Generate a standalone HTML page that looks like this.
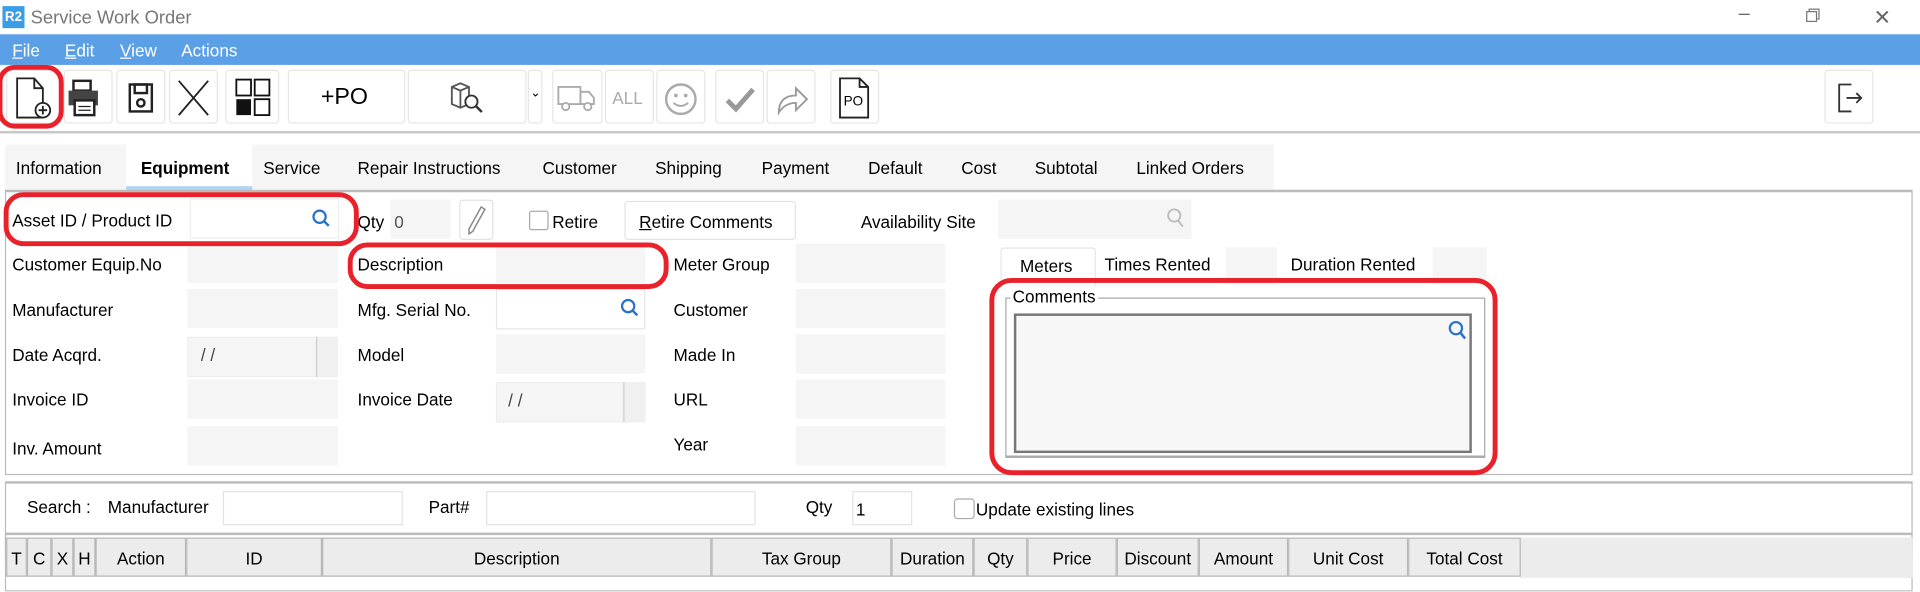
<!DOCTYPE html>
<html><head><meta charset="utf-8"><style>
*{box-sizing:border-box;margin:0;padding:0}
body{width:1920px;height:592px;overflow:hidden;background:#fff;font-family:"Liberation Sans",sans-serif;}
#w{position:absolute;left:0;top:0;width:1568px;height:483px;transform:scale(1.22449);transform-origin:0 0;font-size:14px;color:#000}
.a{position:absolute}
.t{position:absolute;white-space:nowrap;line-height:1}
.in{position:absolute;background:#f5f5f5;height:32px}
.btn{position:absolute;top:57px;height:44px;border:1px solid #e6e6e6;border-radius:3px;background:#fff}
.red{position:absolute;border:4px solid #e8212a;border-radius:16px}
.tab{position:absolute;top:129px}
.h{position:absolute;top:439px;height:32px;background:#ececec;border:1px solid #b8b8b8;text-align:center;line-height:32px;font-size:14px}
u{text-decoration:underline}
</style></head><body><div id="w">
<!-- title -->
<div class="a" style="left:2px;top:5px;width:18px;height:18px;background:#3b9de6;color:#fff;font-size:11px;font-weight:bold;text-align:center;line-height:18px">R2</div>
<div class="t" style="left:25px;top:7px;font-size:15px;color:#777">Service Work Order</div>
<div class="t" style="left:1420px;top:4px;font-size:16px;color:#666">–</div>
<div class="a" style="left:1477px;top:7px;width:9px;height:9px;border:1px solid #777"></div>
<div class="a" style="left:1475px;top:9px;width:9px;height:9px;border:1px solid #777;background:#fff"></div>
<div class="t" style="left:1530px;top:6px;font-size:17px;color:#666">✕</div>
<!-- menu -->
<div class="a" style="left:0;top:28px;width:1568px;height:25px;background:#5b9fe6"></div>
<div class="t" style="left:10px;top:34px;color:#fff"><u>F</u>ile</div>
<div class="t" style="left:53px;top:34px;color:#fff"><u>E</u>dit</div>
<div class="t" style="left:98px;top:34px;color:#fff"><u>V</u>iew</div>
<div class="t" style="left:148px;top:34px;color:#fff">Actions</div>
<!-- toolbar -->
<div class="btn" style="left:5px;width:45px"></div>
<svg class="a" style="left:12px;top:62px" width="32" height="36"><path d="M2 2h14l7 8v24H2z M16 2v8h7" fill="none" stroke="#222" stroke-width="1.5"/><circle cx="23" cy="28" r="6" fill="#fff" stroke="#222" stroke-width="1.5"/><path d="M19.5 28h7M23 24.5v7" stroke="#222" stroke-width="1.5"/></svg>
<div class="btn" style="left:52px;width:40px"></div>
<svg class="a" style="left:54px;top:64px" width="30" height="32"><rect x="6" y="2" width="14" height="8" fill="none" stroke="#222" stroke-width="2"/><rect x="2" y="10" width="24" height="12" fill="#444"/><rect x="7" y="18" width="16" height="12" fill="#fff" stroke="#222" stroke-width="2"/><path d="M10 23h10M10 26h10" stroke="#222"/></svg>
<div class="btn" style="left:95px;width:40px"></div>
<svg class="a" style="left:104px;top:67px" width="22" height="26"><rect x="2" y="2" width="18" height="22" fill="none" stroke="#222" stroke-width="2"/><rect x="6" y="2" width="10" height="7" fill="none" stroke="#222" stroke-width="2"/><circle cx="11" cy="17" r="3" fill="none" stroke="#222" stroke-width="2"/></svg>
<div class="btn" style="left:138px;width:40px"></div>
<svg class="a" style="left:144px;top:64px" width="28" height="32"><path d="M2 2L26 30M26 2L2 30" stroke="#222" stroke-width="1.5"/></svg>
<div class="btn" style="left:184px;width:44px"></div>
<svg class="a" style="left:192px;top:64px" width="30" height="32"><rect x="1" y="1" width="12" height="13" fill="none" stroke="#111" stroke-width="1.5"/><rect x="16" y="1" width="12" height="13" fill="none" stroke="#111" stroke-width="1.5"/><rect x="1" y="17" width="12" height="13" fill="#111"/><rect x="16" y="17" width="12" height="13" fill="none" stroke="#111" stroke-width="1.5"/></svg>
<div class="btn" style="left:235px;width:96px"></div>
<div class="t" style="left:262px;top:70px;font-size:19px">+PO</div>
<div class="btn" style="left:333px;width:97px"></div>
<svg class="a" style="left:366px;top:66px" width="32" height="28"><path d="M3 5l7-3 7 3v14l-7 3-7-3z M3 5l7 3 7-3 M10 8v14" fill="none" stroke="#555" stroke-width="1.5"/><circle cx="19" cy="17" r="5" fill="#fff" stroke="#333" stroke-width="1.5"/><path d="M22.5 20.5l5 5" stroke="#333" stroke-width="2"/></svg>
<div class="btn" style="left:431px;width:12px"></div>
<div class="t" style="left:433px;top:72px;font-size:10px">⌄</div>
<div class="btn" style="left:451px;width:41px"></div>
<svg class="a" style="left:454px;top:68px" width="34" height="24"><rect x="2" y="3" width="18" height="14" fill="none" stroke="#aaa" stroke-width="1.5"/><path d="M20 7h7l4 5v5H20z" fill="none" stroke="#aaa" stroke-width="1.5"/><circle cx="8" cy="19" r="3" fill="#fff" stroke="#aaa" stroke-width="1.5"/><circle cx="26" cy="19" r="3" fill="#fff" stroke="#aaa" stroke-width="1.5"/></svg>
<div class="btn" style="left:494px;width:40px"></div>
<div class="t" style="left:500px;top:73px;font-size:14px;color:#aaa">ALL</div>
<div class="btn" style="left:536px;width:40px"></div>
<svg class="a" style="left:541px;top:66px" width="30" height="30"><circle cx="15" cy="15" r="12" fill="none" stroke="#aaa" stroke-width="2"/><circle cx="11" cy="12" r="1.5" fill="#aaa"/><circle cx="19" cy="12" r="1.5" fill="#aaa"/><path d="M9 18q6 5 12 0" fill="none" stroke="#aaa" stroke-width="1.5"/></svg>
<div class="btn" style="left:584px;width:40px"></div>
<svg class="a" style="left:592px;top:70px" width="26" height="22"><path d="M2 12l7 7L23 3" fill="none" stroke="#999" stroke-width="4"/></svg>
<div class="btn" style="left:626px;width:40px"></div>
<svg class="a" style="left:632px;top:66px" width="30" height="30"><path d="M4 26q0-14 14-14V6l9 9-9 9v-6q-9 0-14 8z" fill="none" stroke="#999" stroke-width="1.5"/></svg>
<div class="btn" style="left:678px;width:40px"></div>
<svg class="a" style="left:684px;top:62px" width="28" height="36"><path d="M2 2h16l7 7v25H2z M18 2v7h7" fill="none" stroke="#222" stroke-width="1.5"/><text x="5" y="24" font-size="11" font-family="Liberation Sans">PO</text></svg>
<div class="btn" style="left:1490px;width:40px"></div>
<svg class="a" style="left:1498px;top:66px" width="26" height="28"><path d="M14 3H4v22h10" fill="none" stroke="#333" stroke-width="1.5"/><path d="M10 14h12M18 10l4 4-4 4" fill="none" stroke="#333" stroke-width="1.5"/></svg>
<div class="red" style="left:-2px;top:53px;width:54px;height:52px;border-radius:14px"></div>
<div class="a" style="left:0;top:107px;width:1568px;height:2px;background:#c8c8c8"></div>
<!-- tabs -->
<div class="a" style="left:4px;top:118px;width:1036px;height:37px;background:#f5f5f5"></div>
<div class="a" style="left:103px;top:118px;width:103px;height:37px;background:#fff"></div>
<div class="a" style="left:103px;top:152px;width:103px;height:4px;background:#b5d3f3"></div>
<div class="tab" style="left:13px">Information</div>
<div class="tab" style="left:115px;font-weight:bold">Equipment</div>
<div class="tab" style="left:215px">Service</div>
<div class="tab" style="left:292px">Repair Instructions</div>
<div class="tab" style="left:443px">Customer</div>
<div class="tab" style="left:535px">Shipping</div>
<div class="tab" style="left:622px">Payment</div>
<div class="tab" style="left:709px">Default</div>
<div class="tab" style="left:785px">Cost</div>
<div class="tab" style="left:845px">Subtotal</div>
<div class="tab" style="left:928px">Linked Orders</div>
<div class="a" style="left:4px;top:155px;width:1558px;height:233px;border:1px solid #bbb;border-top-width:2px"></div>
<!-- row1 -->
<div class="t" style="left:10px;top:173px">Asset ID / Product ID</div>
<div class="a" style="left:155px;top:162px;width:122px;height:33px;background:#fff;border:1px solid #eee"></div>
<svg class="a" style="left:254px;top:170px" width="16" height="16"><circle cx="7" cy="7" r="5" fill="none" stroke="#2a72c9" stroke-width="1.8"/><path d="M10.5 10.5l4 4" stroke="#2a72c9" stroke-width="2"/></svg>
<div class="t" style="left:292px;top:174px">Qty</div>
<div class="in" style="left:319px;top:163px;width:49px"></div>
<div class="t" style="left:322px;top:174px;color:#555">0</div>
<div class="a" style="left:375px;top:163px;width:28px;height:33px;border:1px solid #e3e3e3;border-radius:3px"></div>
<svg class="a" style="left:380px;top:167px" width="18" height="26"><path d="M13 2l3 2-10 18-3 2 0-4z" fill="none" stroke="#888" stroke-width="1.2"/></svg>
<div class="a" style="left:432px;top:172px;width:16px;height:16px;border:1px solid #aaa;border-radius:2px"></div>
<div class="t" style="left:451px;top:174px">Retire</div>
<div class="a" style="left:510px;top:164px;width:140px;height:32px;border:1px solid #e3e3e3;border-radius:3px"></div>
<div class="t" style="left:522px;top:174px"><u>R</u>etire Comments</div>
<div class="t" style="left:703px;top:174px">Availability Site</div>
<div class="in" style="left:815px;top:163px;width:158px"></div>
<svg class="a" style="left:952px;top:169px" width="16" height="18"><circle cx="7" cy="7" r="5" fill="none" stroke="#bbb" stroke-width="1.5"/><path d="M10 11l4 5" stroke="#bbb" stroke-width="1.5"/></svg>
<!-- col labels -->
<div class="t" style="left:10px;top:209px">Customer Equip.No</div>
<div class="in" style="left:153px;top:199px;width:123px"></div>
<div class="t" style="left:292px;top:209px">Description</div>
<div class="in" style="left:405px;top:199px;width:122px"></div>
<div class="t" style="left:550px;top:209px">Meter Group</div>
<div class="in" style="left:650px;top:199px;width:122px"></div>
<div class="t" style="left:10px;top:246px">Manufacturer</div>
<div class="in" style="left:153px;top:236px;width:123px"></div>
<div class="t" style="left:292px;top:246px">Mfg. Serial No.</div>
<div class="a" style="left:405px;top:236px;width:122px;height:33px;border:1px solid #e6e6e6;background:#fff"></div>
<svg class="a" style="left:506px;top:243px" width="16" height="16"><circle cx="7" cy="7" r="5" fill="none" stroke="#2a72c9" stroke-width="1.8"/><path d="M10.5 10.5l4 4" stroke="#2a72c9" stroke-width="2"/></svg>
<div class="t" style="left:550px;top:246px">Customer</div>
<div class="in" style="left:650px;top:236px;width:122px"></div>
<div class="t" style="left:10px;top:283px">Date Acqrd.</div>
<div class="in" style="left:153px;top:275px;width:123px;height:33px;border:1px solid #eee"></div>
<div class="a" style="left:258px;top:275px;width:18px;height:33px;border-left:1px solid #ccc;background:#f0f0f0"></div>
<div class="t" style="left:164px;top:283px;color:#444">/ /</div>
<div class="t" style="left:292px;top:283px">Model</div>
<div class="in" style="left:405px;top:273px;width:122px"></div>
<div class="t" style="left:550px;top:283px">Made In</div>
<div class="in" style="left:650px;top:273px;width:122px"></div>
<div class="t" style="left:10px;top:319px">Invoice ID</div>
<div class="in" style="left:153px;top:310px;width:123px"></div>
<div class="t" style="left:292px;top:319px">Invoice Date</div>
<div class="in" style="left:405px;top:312px;width:122px;height:33px;border:1px solid #eee"></div>
<div class="a" style="left:509px;top:312px;width:18px;height:33px;border-left:1px solid #ccc;background:#f0f0f0"></div>
<div class="t" style="left:415px;top:320px;color:#444">/ /</div>
<div class="t" style="left:550px;top:319px">URL</div>
<div class="in" style="left:650px;top:310px;width:122px"></div>
<div class="t" style="left:10px;top:359px">Inv. Amount</div>
<div class="in" style="left:153px;top:348px;width:123px"></div>
<div class="t" style="left:550px;top:356px">Year</div>
<div class="in" style="left:650px;top:348px;width:122px"></div>
<!-- meters -->
<div class="a" style="left:817px;top:202px;width:78px;height:32px;border:1px solid #e3e3e3;border-bottom:none;border-radius:3px 3px 0 0"></div>
<div class="t" style="left:833px;top:210px">Meters</div>
<div class="t" style="left:902px;top:209px">Times Rented</div>
<div class="a" style="left:1001px;top:202px;width:42px;height:30px;background:#f5f5f5"></div>
<div class="t" style="left:1054px;top:209px">Duration Rented</div>
<div class="a" style="left:1170px;top:202px;width:44px;height:30px;background:#f5f5f5"></div>
<div class="a" style="left:821px;top:243px;width:392px;height:131px;border:1px solid #aaa;border-bottom:2px solid #aaa"></div>
<div class="t" style="left:825px;top:235px;background:#fff;padding:0 2px">Comments</div>
<div class="a" style="left:828px;top:256px;width:374px;height:114px;background:#f7f7f7;border:2px solid #777"></div>
<svg class="a" style="left:1182px;top:261px" width="16" height="18"><circle cx="7" cy="7" r="5" fill="none" stroke="#2a72c9" stroke-width="1.8"/><path d="M10.5 10.5l4 5" stroke="#2a72c9" stroke-width="2"/></svg>
<!-- red boxes -->
<div class="red" style="left:3px;top:157px;width:290px;height:44px"></div>
<div class="red" style="left:284px;top:198px;width:262px;height:38px"></div>
<div class="red" style="left:808px;top:227px;width:415px;height:161px;border-radius:18px"></div>
<!-- search -->
<div class="a" style="left:4px;top:393px;width:1558px;height:63px;border:1px solid #bbb;border-top-width:2px"></div>
<div class="t" style="left:22px;top:407px;font-size:14px">Search :</div>
<div class="t" style="left:88px;top:407px;font-size:14px">Manufacturer</div>
<div class="a" style="left:182px;top:401px;width:147px;height:28px;border:1px solid #e3e3e3"></div>
<div class="t" style="left:350px;top:407px;font-size:14px">Part#</div>
<div class="a" style="left:397px;top:401px;width:220px;height:28px;border:1px solid #e3e3e3"></div>
<div class="t" style="left:658px;top:407px;font-size:14px">Qty</div>
<div class="a" style="left:696px;top:401px;width:49px;height:28px;border:1px solid #e3e3e3"></div>
<div class="t" style="left:699px;top:409px;font-size:14px">1</div>
<div class="a" style="left:779px;top:407px;width:17px;height:17px;border:1px solid #aaa;border-radius:3px"></div>
<div class="t" style="left:797px;top:409px;font-size:14px">Update existing lines</div>
<!-- grid -->
<div class="a" style="left:4px;top:435px;width:1558px;height:48px;border:1px solid #bbb;border-top-width:2px"></div>
<div class="a" style="left:1242px;top:439px;width:320px;height:33px;background:#ececec"></div>
<div class="h" style="left:5px;width:17px">T</div>
<div class="h" style="left:22px;width:20px">C</div>
<div class="h" style="left:42px;width:18px">X</div>
<div class="h" style="left:60px;width:18px">H</div>
<div class="h" style="left:78px;width:74px">Action</div>
<div class="h" style="left:152px;width:111px">ID</div>
<div class="h" style="left:263px;width:318px">Description</div>
<div class="h" style="left:581px;width:147px">Tax Group</div>
<div class="h" style="left:728px;width:67px">Duration</div>
<div class="h" style="left:795px;width:44px">Qty</div>
<div class="h" style="left:839px;width:73px">Price</div>
<div class="h" style="left:912px;width:67px">Discount</div>
<div class="h" style="left:979px;width:73px">Amount</div>
<div class="h" style="left:1052px;width:98px">Unit Cost</div>
<div class="h" style="left:1150px;width:92px">Total Cost</div>
</div></body></html>
